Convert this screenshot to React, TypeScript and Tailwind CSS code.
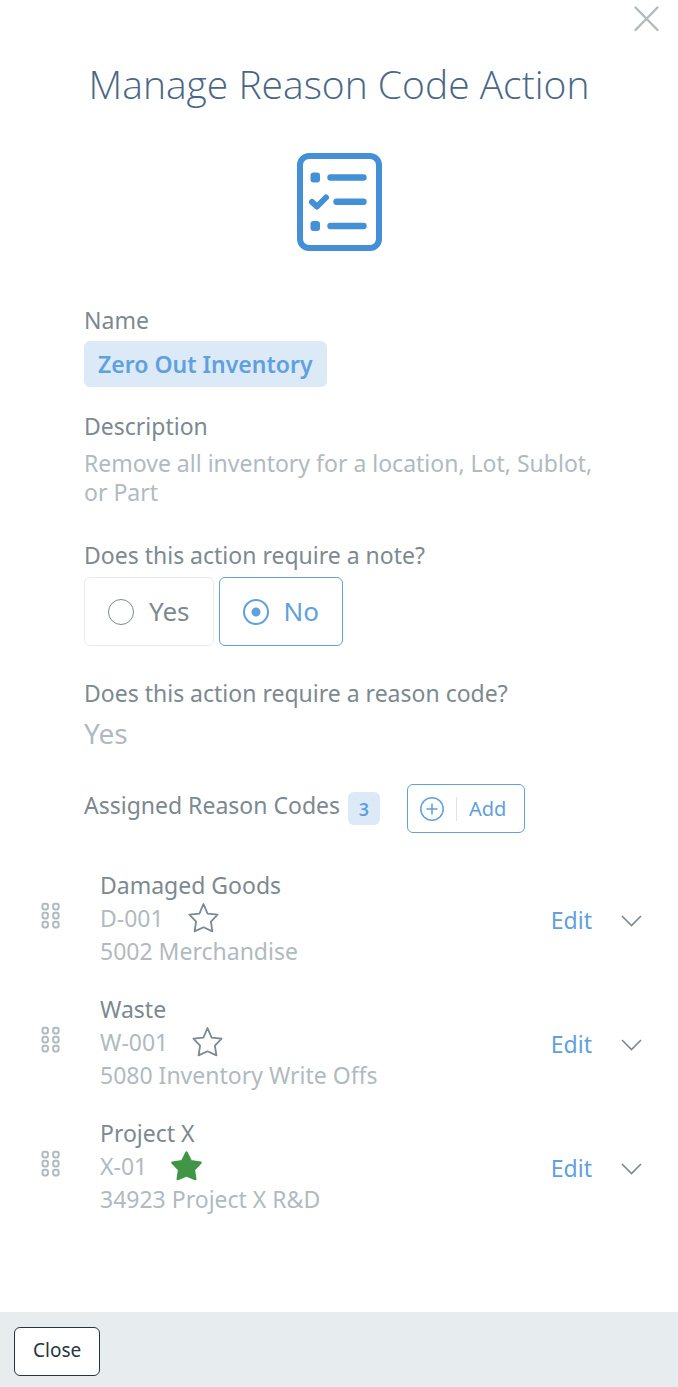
import { useState } from "react";

type ReasonCode = {
  id: number;
  name: string;
  code: string;
  account: string;
};

const reasonCodes: ReasonCode[] = [
  { id: 1, name: "Damaged Goods", code: "D-001", account: "5002 Merchandise" },
  { id: 2, name: "Waste", code: "W-001", account: "5080 Inventory Write Offs" },
  { id: 3, name: "Project X", code: "X-01", account: "34923 Project X R&D" },
];

function ChecklistIcon() {
  return (
    <svg width="86" height="98" viewBox="0 0 86 98" fill="none" stroke="#4390d6" strokeLinecap="round" strokeLinejoin="round" aria-hidden="true">
      <rect x="4" y="3" width="79" height="92" rx="9" strokeWidth="6" />
      <path d="M34.500 24.500H67.500M40.500 48.700H67.500M34.500 73H67.500" strokeWidth="6.400" />
      <path d="M16 49L21 53.500L30 44.500" strokeWidth="6" />
      <rect x="14.500" y="19.500" width="9.500" height="10" rx="3" fill="#4390d6" stroke="none" />
      <rect x="14.500" y="68" width="9.500" height="10" rx="3" fill="#4390d6" stroke="none" />
    </svg>
  );
}

function DragIcon() {
  return (
    <svg width="20" height="28" viewBox="0 0 20 28" fill="none" stroke="#b0babf" strokeWidth="2" aria-hidden="true">
      {[1.8, 10.8, 19.8].map((y) => (
        <g key={y}>
          <rect x="2.500" y={y} width="5.400" height="5.600" rx="1.800" />
          <rect x="13.200" y={y} width="5.400" height="5.600" rx="1.800" />
        </g>
      ))}
    </svg>
  );
}

function StarIcon({ filled }: { filled: boolean }) {
  return (
    <svg
      width="32"
      height="32"
      viewBox="0 0 32 32"
      fill={filled ? "#419645" : "none"}
      stroke={filled ? "#419645" : "#7c8990"}
      strokeWidth="1.800"
      strokeLinejoin="round"
      aria-hidden="true"
    >
      {filled ? (
        <path d="M15.500 2.500L19.900 11.300L29.600 12.600L22.900 19.800L24.300 29.100L15.500 25.500L6.700 29.100L8.100 19.800L1.400 12.600L11.100 11.300Z" strokeWidth="2.400" />
      ) : (
        <path d="M15.500 2L19.600 11.700L29.600 12.700L22.900 19.600L24.400 29.400L15.500 25.300L6.600 29.400L8.100 19.600L1.400 12.700L11.400 11.700Z" />
      )}
    </svg>
  );
}

function ReasonCodeRow({ item, starred, onStar }: { item: ReasonCode; starred: boolean; onStar: () => void }) {
  return (
    <li className="flex items-center pr-9 pl-10">
      <button type="button" aria-label={`Reorder ${item.name}`} className="mr-10 mb-1 cursor-grab">
        <DragIcon />
      </button>
      <div className="flex-1">
        <h3 className="leading-8 text-[#7c8990]">{item.name}</h3>
        <div className="flex items-center gap-6 text-[#b0babf]">
          <span className="leading-[34px]">{item.code}</span>
          <button type="button" aria-label={`Set ${item.name} as default`} aria-pressed={starred} onClick={onStar}>
            <StarIcon filled={starred} />
          </button>
        </div>
        <p className="leading-8 text-[#b0babf]">{item.account}</p>
      </div>
      <div className="flex items-center gap-7 pt-1">
        <a href="#edit" className="text-[#5fa0de]">
          Edit
        </a>
        <button type="button" aria-label={`Expand ${item.name}`}>
          <svg width="22" height="14" viewBox="0 0 22 14" fill="none" stroke="#7c8990" strokeWidth="1.600" aria-hidden="true">
            <path d="M2 3L11.500 12.500L21 3" />
          </svg>
        </button>
      </div>
    </li>
  );
}

export default function App() {
  const [note, setNote] = useState("No");
  const [defaultId, setDefaultId] = useState(3);

  return (
    <div className="flex min-h-screen flex-col bg-white font-['Noto_Sans',sans-serif] text-[23px] text-[#7c8990]">
      <header className="flex flex-col">
        <button type="button" aria-label="Close dialog" className="mt-1 mr-4 self-end">
          <svg width="30" height="30" viewBox="0 0 30 30" fill="none" stroke="#b0babf" strokeWidth="2.400" strokeLinecap="round" aria-hidden="true">
            <path d="M3.500 3.500L25.500 26M25.500 3.500L3.500 26" />
          </svg>
        </button>
        <h1 className="mt-6 text-center font-['Open_Sans',sans-serif] text-[39px] leading-[52px] font-light text-[#4a6785]">
          Manage Reason Code Action
        </h1>
        <div className="mt-[43px] flex justify-center">
          <ChecklistIcon />
        </div>
      </header>

      <main className="flex-1">
        <div className="px-[84px]">
          <h2 className="mt-[53px] leading-8">Name</h2>
          <p className="mt-[5px] inline-block rounded-md bg-[#dceaf8] px-3.5 py-2 leading-[30px] font-semibold text-[#5fa0de]">
            Zero Out Inventory
          </p>

          <h2 className="mt-[23px] leading-8">Description</h2>
          <p className="mt-[7px] leading-[29px] text-[#b0babf]">Remove all inventory for a location, Lot, Sublot, or Part</p>

          <fieldset className="mt-8">
            <legend className="leading-8">Does this action require a note?</legend>
            <div className="mt-1.5 flex gap-[5px] text-[26px]">
              {["Yes", "No"].map((option) => (
                <label
                  key={option}
                  className="flex h-[69px] items-center gap-[15px] rounded-md border border-[#e8ebec] px-[23px] has-checked:border-[#5fa0de] has-checked:text-[#5fa0de]"
                >
                  <input
                    type="radio"
                    name="note"
                    value={option}
                    checked={note === option}
                    onChange={() => setNote(option)}
                    className="size-[26px] appearance-none rounded-full border border-[#7c8990] checked:border-2 checked:border-[#5fa0de] checked:bg-[radial-gradient(circle,#5fa0de_0_4px,transparent_5px)]"
                  />
                  {option}
                </label>
              ))}
            </div>
          </fieldset>

          <h2 className="mt-[31px] leading-8">Does this action require a reason code?</h2>
          <p className="mt-1.5 text-[28px] leading-9 text-[#b0babf]">Yes</p>

          <div className="mt-[33px] flex items-center">
            <h2 className="mb-2 leading-8">Assigned Reason Codes</h2>
            <span className="ml-2 flex h-[33px] w-8 items-center justify-center rounded-md bg-[#dceaf8] text-lg font-semibold text-[#5fa0de]">
              {reasonCodes.length}
            </span>
            <button
              type="button"
              className="ml-[27px] flex h-[49px] items-center rounded-md border border-[#5fa0de] px-3 text-xl text-[#5fa0de]"
            >
              <svg width="24" height="24" viewBox="0 0 24 24" fill="none" stroke="currentColor" strokeWidth="1.500" strokeLinecap="round" aria-hidden="true">
                <circle cx="12" cy="12" r="11.200" />
                <path d="M12 7V17M7 12H17" />
              </svg>
              <span className="ml-3 border-l border-[#dfe3e5] pr-1.5 pl-3 leading-6">Add</span>
            </button>
          </div>
        </div>

        <ul className="mt-9 mb-24 flex flex-col gap-[26px]">
          {reasonCodes.map((item) => (
            <ReasonCodeRow key={item.id} item={item} starred={item.id === defaultId} onStar={() => setDefaultId(item.id)} />
          ))}
        </ul>
      </main>

      <footer className="bg-[#e7edee] px-3.5 pt-[15px] pb-[11px]">
        <button type="button" className="h-[49px] rounded-md border border-[#263640] bg-white px-[18px] pb-0.5 text-[19px] text-[#263640]">
          Close
        </button>
      </footer>
    </div>
  );
}
